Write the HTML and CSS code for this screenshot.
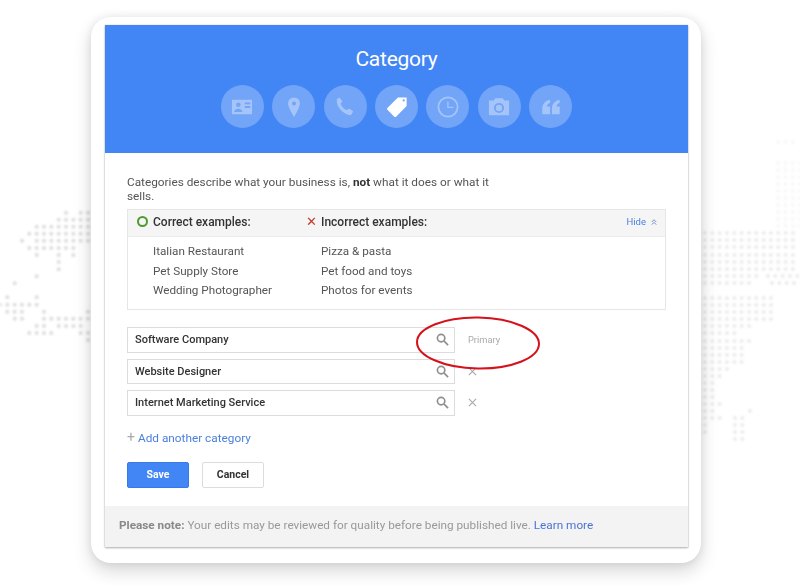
FILE: index.html
```html
<!DOCTYPE html>
<html lang="en">
<head>
  <meta charset="UTF-8">
  <meta name="viewport" content="width=device-width, initial-scale=1">
  <title>Category</title>
  <link rel="stylesheet" href="styles.css">
</head>
<body>
  <!-- dotted world map behind the card -->
  <svg class="map" viewBox="0 0 800 585" width="800" height="585" aria-hidden="true">
    <g class="dots-left">
      <path d="M66 212.7h1M80.7 212.7h7.4"/>
      <path d="M58.7 219.7h29.4"/>
      <path d="M36.7 226.7h51.4"/>
      <path d="M29.3 233.7h58.8"/>
      <path d="M22 240.7h1M36.7 240.7h51.4"/>
      <path d="M29.3 248h44"/>
      <path d="M36.7 255h1M58.7 255h1M73.3 255h1"/>
      <path d="M58.7 262h1M58.7 269.3h1M36.7 276.3h1M14.7 283.3h1"/>
      <path d="M7.3 297.3h1M36.7 297.3h1"/>
      <path d="M0 304.7h37"/>
      <path d="M7.3 311.7h15M44 311.7h1M88 311.7h1"/>
      <path d="M14.7 318.7h8M44 318.7h44"/>
      <path d="M36.7 326h8M58.7 326h22"/>
      <path d="M29.3 333h22M80.7 333h8M88 340h1"/>
    </g>
    <g class="dots-right faint">
      <path d="M778 142h15"/>
      <path d="M778 163h22M778 170h22M778 177h22M778 184h22M778 191h22M778 198h22M778 205h22M778 212h22M778 219h22M778 226h22"/>
    </g>
    <g class="dots-right">
      <path d="M705 233h95M705 240h95M705 247h95M705 255h95M705 262h95M705 269h95M705 276h55M768 276h32M705 283h45M772 283h28"/>
      <path d="M705 298h67M705 305h67M705 312h67M705 319h67"/>
      <path d="M705 326h51M705 333h30M705 341h51"/>
      <path d="M705 348h37M705 355h37M705 362h37M705 369h22M705 376h15"/>
      <path d="M705 383h8M705 390h8M705 397h8M705 404h15M705 411h8M750 411h1"/>
      <path d="M705 418h15M735 418h8M705 425h1M735 425h8M705 432h1M735 432h8M735 439h8"/>
    </g>
  </svg>

  <div class="card">
    <div class="panel">
      <div class="panel-head">
        <h1>Category</h1>
        <div class="steps">
          <span class="step">
            <svg viewBox="0 0 24 24"><path fill-rule="evenodd" d="M1 4h22v16H1zM8 7a2.500 2.500 0 1 1 0 5 2.500 2.500 0 0 1 0-5zM3.500 17.500c0-2.500 3-3.700 4.500-3.700s4.500 1.200 4.500 3.700zM15 7h6v2h-6zM15 11h6v2h-6z"/></svg>
          </span>
          <span class="step">
            <svg viewBox="0 0 24 24"><path fill-rule="evenodd" d="M12 1.500a6.500 6.500 0 0 0-6.500 6.500c0 5 6.500 15 6.500 15s6.500-10 6.500-15A6.500 6.500 0 0 0 12 1.500zM12 6a2.200 2.200 0 1 1 0 4.400A2.200 2.200 0 0 1 12 6z"/></svg>
          </span>
          <span class="step">
            <svg viewBox="0 0 24 24"><path d="M6 1.500l3.200 4.300-2 2.700c1.200 3 3.500 5.500 6.500 7l2.700-2 4.600 3.200-2.500 4.300C9.500 20 2.500 12 3 3.500z"/></svg>
          </span>
          <span class="step">
            <svg class="on" viewBox="0 0 24 24"><path fill-rule="evenodd" d="M13 1.500h9.500V11L11 22.500a1.500 1.500 0 0 1-2 0L1.500 15a1.500 1.500 0 0 1 0-2zM19.300 3.600a1.200 1.200 0 1 0 0 2.400 1.200 1.200 0 0 0 0-2.400z"/></svg>
          </span>
          <span class="step">
            <svg viewBox="0 0 24 24"><path fill-rule="evenodd" d="M12 .5a11.500 11.500 0 1 0 0 23 11.500 11.500 0 0 0 0-23zM12 2.500a9.500 9.500 0 1 1 0 19 9.500 9.500 0 0 1 0-19zM11.200 6h1.400v5.800H18v1.400h-6.800z"/></svg>
          </span>
          <span class="step">
            <svg viewBox="0 0 24 24"><path fill-rule="evenodd" d="M8 2.500L6.200 5H1v16h22V5h-5.200L16 2.500zM12 7.500a5.500 5.500 0 1 1 0 11 5.500 5.500 0 0 1 0-11zM12 9.500a3.500 3.500 0 1 0 0 7 3.500 3.500 0 0 0 0-7z"/></svg>
          </span>
          <span class="step">
            <svg viewBox="0 0 24 24"><path d="M11 4C6 5 2.500 8.500 2.500 13.500V20h8.500v-8.500H7.500c.2-2 1.500-3.300 3.500-4.200zM21.500 4c-5 1-8.500 4.500-8.500 9.500V20h8.500v-8.500H18c.2-2 1.500-3.300 3.500-4.200z"/></svg>
          </span>
        </div>
      </div>

      <div class="panel-body">
        <p class="intro">Categories describe what your business is, <b>not</b> what it does or what it sells.</p>

        <div class="examples">
          <div class="examples-head">
            <span class="col-good"><i class="ring"></i>Correct examples:</span>
            <span class="col-bad"><i class="cross">&#10005;</i>Incorrect examples:</span>
            <a class="hide">Hide
              <svg class="chev" viewBox="0 0 8 8"><path d="M1 4l3-3 3 3M1 7.500l3-3 3 3"/></svg>
            </a>
          </div>
          <div class="examples-list">
            <ul class="col-good">
              <li>Italian Restaurant</li>
              <li>Pet Supply Store</li>
              <li>Wedding Photographer</li>
            </ul>
            <ul class="col-bad">
              <li>Pizza &amp; pasta</li>
              <li>Pet food and toys</li>
              <li>Photos for events</li>
            </ul>
          </div>
        </div>

        <div class="fields">
          <div class="field">
            <div class="input">Software Company
              <svg class="search" viewBox="0 0 14 14"><circle cx="5.500" cy="5.500" r="4"/><path d="M8.500 8.500L13 13"/></svg>
            </div>
            <span class="primary">Primary</span>
          </div>
          <div class="field">
            <div class="input">Website Designer
              <svg class="search" viewBox="0 0 14 14"><circle cx="5.500" cy="5.500" r="4"/><path d="M8.500 8.500L13 13"/></svg>
            </div>
            <svg class="remove" viewBox="0 0 10 10"><path d="M1 1l8 8M9 1l-8 8"/></svg>
          </div>
          <div class="field">
            <div class="input">Internet Marketing Service
              <svg class="search" viewBox="0 0 14 14"><circle cx="5.500" cy="5.500" r="4"/><path d="M8.500 8.500L13 13"/></svg>
            </div>
            <svg class="remove" viewBox="0 0 10 10"><path d="M1 1l8 8M9 1l-8 8"/></svg>
          </div>
          <svg class="circled" viewBox="0 0 126 56"><ellipse cx="63" cy="28" rx="61" ry="25.500" transform="rotate(1 63 28)"/></svg>
        </div>

        <a class="add"><span class="plus">+</span>Add another category</a>

        <div class="actions">
          <button class="btn btn-save">Save</button>
          <button class="btn btn-cancel">Cancel</button>
        </div>
      </div>

      <div class="note"><b>Please note:</b> Your edits may be reviewed for quality before being published live. <a>Learn more</a></div>
    </div>
  </div>
</body>
</html>
```

FILE: styles.css
```css
* {
  margin: 0;
  padding: 0;
  box-sizing: border-box;
}

html, body {
  height: 585px;
  overflow: hidden;
}

body {
  background: #fff;
  font-family: Roboto, "Liberation Sans", sans-serif;
  color: #555;
  position: relative;
}

.map {
  position: absolute;
  top: 0;
  left: 0;
  filter: blur(1px);
}

.map path {
  fill: none;
  stroke: #dcdcdc;
  stroke-width: 4;
  stroke-linecap: round;
  stroke-dasharray: 0 7.33;
}

.dots-right path {
  stroke: #ebebeb;
}

.dots-right.faint path {
  stroke: #f7f7f7;
}

.card {
  position: relative;
  width: 610px;
  height: 546px;
  margin: 17px 0 0 91px;
  padding: 8px 13px 16px 14px;
  background: #fff;
  border-radius: 20px;
  box-shadow: 0 8px 18px rgba(0, 0, 0, 0.16), 0 0 8px rgba(0, 0, 0, 0.08);
}

.panel {
  height: 100%;
  display: flex;
  flex-direction: column;
  background: #fff;
  box-shadow: 0 1px 2px rgba(0, 0, 0, 0.3), 0 0 1px rgba(0, 0, 0, 0.25);
  filter: blur(0.4px);
}

.panel-head {
  height: 128px;
  padding-top: 20px;
  background: #4285f4;
  text-align: center;
}

h1 {
  font-size: 21px;
  font-weight: 400;
  line-height: 28px;
  letter-spacing: -0.25px;
  color: #fff;
}

.steps {
  display: flex;
  justify-content: center;
  gap: 8.4px;
  margin-top: 12px;
}

.step {
  width: 43px;
  height: 43px;
  display: flex;
  align-items: center;
  justify-content: center;
  border-radius: 50%;
  background: rgba(255, 255, 255, 0.26);
}

.step svg {
  width: 22px;
  height: 22px;
  fill: rgba(255, 255, 255, 0.36);
}

.step svg.on {
  fill: #fff;
}

.panel-body {
  flex: 1;
  padding: 22px 22px 0;
}

.intro {
  width: 372px;
  font-size: 11.8px;
  line-height: 14px;
  color: #555;
}

.intro b {
  color: #333;
}

.examples {
  height: 101px;
  margin-top: 6px;
  border: 1px solid #e6e6e6;
  font-size: 11.7px;
}

.examples-head {
  height: 27px;
  display: flex;
  align-items: center;
  padding-bottom: 3px;
  background: #f5f5f5;
  border-bottom: 1px solid #ececec;
  font-size: 12px;
  font-weight: 500;
  color: #333;
}

.col-good {
  width: 193px;
  padding-left: 25px;
  position: relative;
}

.col-bad {
  flex: 1;
  position: relative;
}

.ring {
  position: absolute;
  left: 9px;
  top: 1px;
  width: 11px;
  height: 11px;
  border: 2px solid #4e9a2e;
  border-radius: 50%;
}

.cross {
  position: absolute;
  left: -15px;
  top: -1px;
  font-style: normal;
  font-size: 13px;
  color: #c0392b;
}

.hide {
  display: flex;
  align-items: center;
  gap: 5px;
  padding-right: 8px;
  font-size: 9.5px;
  font-weight: 400;
  color: #4a7fe0;
}

.chev {
  width: 6px;
  height: 6px;
  fill: none;
  stroke: #6d8fd0;
  stroke-width: 1.3;
}

.examples-list {
  display: flex;
  padding-top: 5px;
}

.examples-list ul {
  list-style: none;
  color: #555;
}

.examples-list li {
  height: 19.7px;
  line-height: 19.7px;
}

.fields {
  position: relative;
  display: flex;
  flex-direction: column;
  gap: 6px;
  margin-top: 17px;
}

.field {
  display: flex;
  align-items: center;
}

.input {
  width: 328px;
  height: 25.5px;
  display: flex;
  align-items: center;
  justify-content: space-between;
  padding: 0 5px 0 7px;
  border: 1px solid #dcdcdc;
  font-size: 11px;
  font-weight: 500;
  color: #333;
}

.search {
  width: 13px;
  height: 13px;
  fill: none;
  stroke: #8f8f8f;
  stroke-width: 1.8;
}

.primary {
  margin-left: 13px;
  font-size: 9.3px;
  color: #aaa;
}

.remove {
  width: 9px;
  height: 9px;
  margin-left: 13px;
  fill: none;
  stroke: #aaa;
  stroke-width: 1.3;
}

.circled {
  position: absolute;
  left: 288px;
  top: -12px;
  width: 126px;
  height: 56px;
  fill: none;
  stroke: #d5121b;
  stroke-width: 2;
}

.add {
  display: block;
  margin-top: 13px;
  font-size: 11.8px;
  line-height: 16px;
  color: #4a7fe0;
}

.plus {
  display: inline-block;
  width: 11px;
  font-size: 14px;
  color: #aaa;
}

.actions {
  display: flex;
  gap: 13px;
  margin-top: 16px;
}

.btn {
  width: 62px;
  height: 26px;
  border-radius: 2px;
  font-family: inherit;
  font-size: 10.5px;
  font-weight: 700;
}

.btn-save {
  border: 1px solid #3b78e7;
  background: #4285f4;
  color: #fff;
}

.btn-cancel {
  border: 1px solid #dcdcdc;
  background: #fff;
  color: #333;
}

.note {
  height: 41px;
  padding: 12px 0 0 14px;
  background: #f3f3f3;
  font-size: 11.76px;
  line-height: 14px;
  color: #999;
}

.note b {
  color: #888;
}

.note a {
  color: #4a72d6;
}
```
